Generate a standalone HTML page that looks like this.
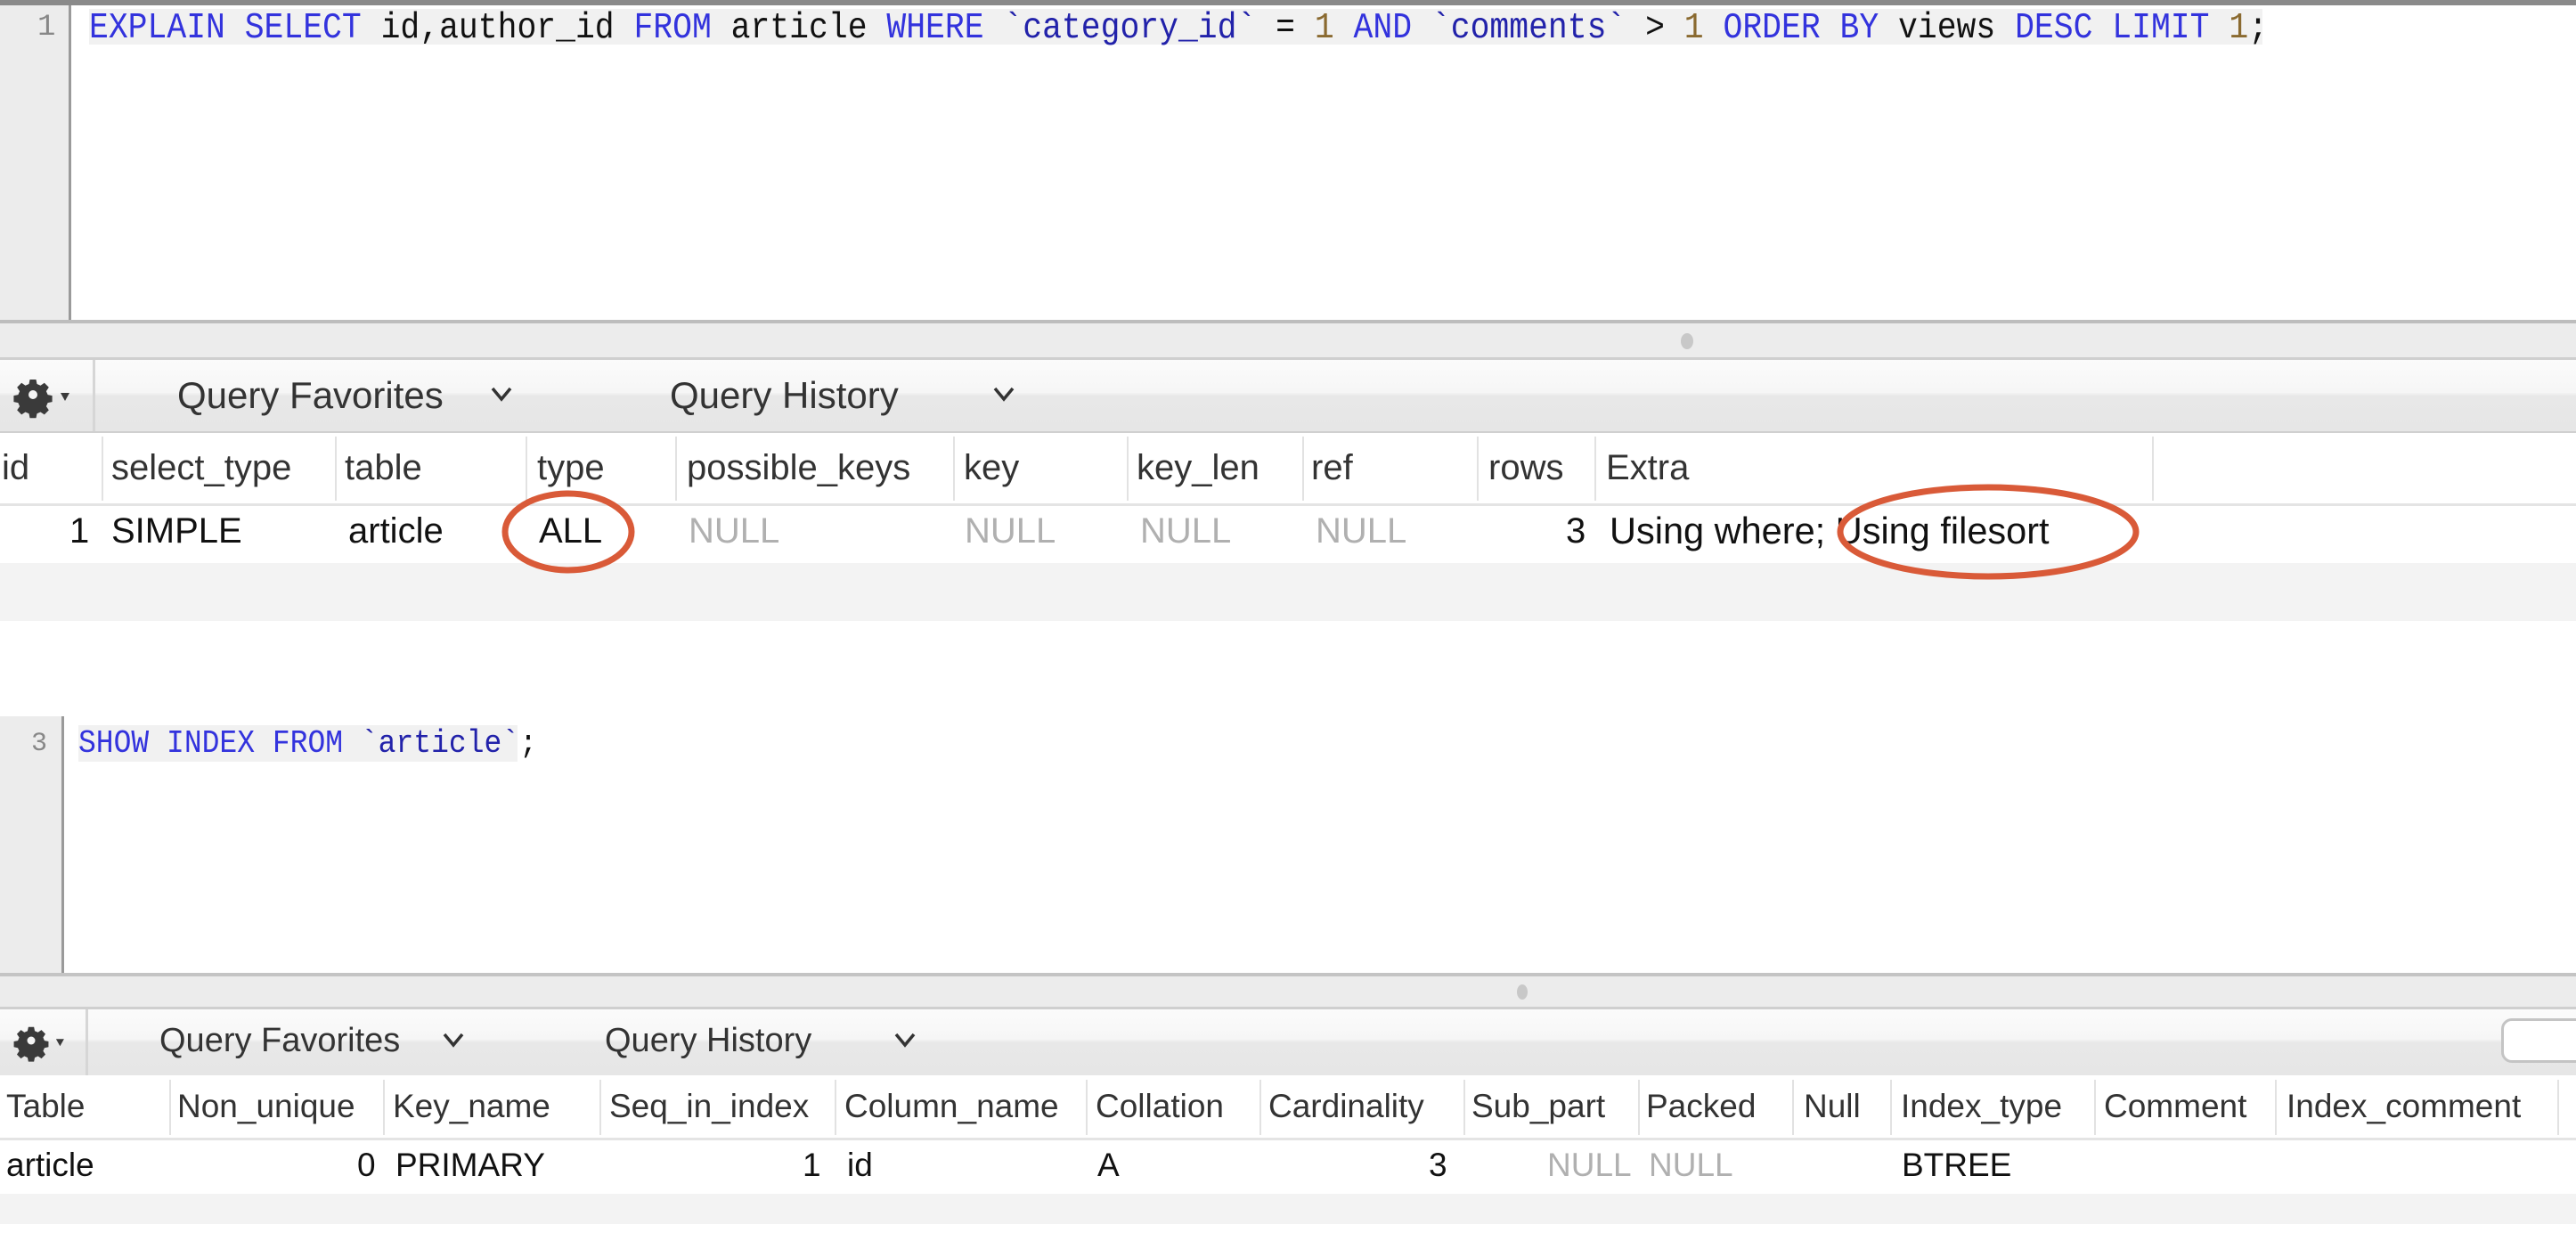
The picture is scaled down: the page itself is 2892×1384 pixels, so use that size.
<!DOCTYPE html>
<html><head><meta charset="utf-8"><style>
*{margin:0;padding:0;box-sizing:border-box}
body{width:2892px;height:1384px;background:#fff;position:relative;overflow:hidden;font-family:"Liberation Sans",sans-serif;color:#111}
.a{position:absolute;white-space:pre}
.mono{font-family:"Liberation Mono",monospace}
.kw{color:#3333dd}.bt{color:#2222aa}.num{color:#8a6a30}
.sep{position:absolute;width:2px;background:#e2e2e2}
.h{color:#333}
.null{color:#b0b0b0}
</style></head><body>
<svg width="0" height="0" style="position:absolute"><defs>
<g id="gear"><path fill="#3a3a3a" d="M-3.5,-17h7l1,5 4,1.7 4.3,-2.9 5,5 -2.9,4.3 1.7,4 5,1v7l-5,1 -1.7,4 2.9,4.3 -5,5 -4.3,-2.9 -4,1.7 -1,5h-7l-1,-5 -4,-1.7 -4.3,2.9 -5,-5 2.9,-4.3 -1.7,-4 -5,-1v-7l5,-1 1.7,-4 -2.9,-4.3 5,-5 4.3,2.9 4,-1.7z"/><circle r="5" fill="#f4f4f4"/><path d="M31,-2h10l-5,9z" fill="#3a3a3a"/></g>
<path id="chev" d="M-10,-6L0,6L10,-6" fill="none" stroke="#333" stroke-width="3.5"/>
</defs></svg>
<!-- top editor -->
<div class="a" style="left:0;top:0;width:2892px;height:6px;background:#8a8a8a"></div>
<div class="a" style="left:0;top:6px;width:78px;height:355px;background:#ececec"></div>
<div class="a" style="left:77px;top:6px;width:3px;height:355px;background:#9a9a9a"></div>
<div class="a" style="left:100px;top:10px;width:2440px;height:40px;background:#f1f1f1"></div>
<div class="a mono" style="left:42px;top:10px;font-size:34px;color:#888;line-height:42px">1</div>
<div class="a mono" style="left:100px;top:9px;font-size:36.4px;line-height:46px;transform:scaleY(1.12);transform-origin:0 50%"><span class="kw">EXPLAIN SELECT</span> id,author_id <span class="kw">FROM</span> article <span class="kw">WHERE</span> <span class="bt">`category_id`</span> = <span class="num">1</span> <span class="kw">AND</span> <span class="bt">`comments`</span> &gt; <span class="num">1</span> <span class="kw">ORDER BY</span> views <span class="kw">DESC LIMIT</span> <span class="num">1</span>;</div>
<div class="a" style="left:0;top:359px;width:2892px;height:4px;background:#bdbdbd"></div>
<div class="a" style="left:0;top:363px;width:2892px;height:40px;background:#ececec"></div>
<div class="a" style="left:1887px;top:374px;width:14px;height:18px;border-radius:50%;background:#c8c8c8"></div>
<div class="a" style="left:0;top:401px;width:2892px;height:3px;background:#cfcfcf"></div>
<!-- toolbar 1 -->
<div class="a" style="left:0;top:404px;width:2892px;height:81px;background:linear-gradient(#fbfbfb,#f6f6f6 45%,#e8e8e8 50%,#e6e6e6)"></div>
<div class="a" style="left:104px;top:404px;width:3px;height:81px;background:#d6d6d6"></div>
<svg class="a" style="left:0;top:404px" width="104" height="81"><use href="#gear" x="37" y="39"/></svg>
<div class="a h" style="left:199px;top:420px;font-size:42px;line-height:48px">Query Favorites</div>
<div class="a h" style="left:752px;top:420px;font-size:42px;line-height:48px">Query History</div>
<svg class="a" style="left:0;top:404px" width="1200" height="81"><use href="#chev" x="563" y="38"/><use href="#chev" x="1127" y="38"/></svg>
<div class="a" style="left:0;top:484px;width:2892px;height:2px;background:#d0d0d0"></div>
<!-- header 1 -->
<div class="a" style="left:0;top:486px;width:2892px;height:81px;background:#fff"></div>
<div class="a" style="left:0;top:565px;width:2892px;height:3px;background:#e4e4e4"></div>
<div class="sep" style="left:114px;top:490px;height:72px"></div>
<div class="sep" style="left:376px;top:490px;height:72px"></div>
<div class="sep" style="left:590px;top:490px;height:72px"></div>
<div class="sep" style="left:758px;top:490px;height:72px"></div>
<div class="sep" style="left:1070px;top:490px;height:72px"></div>
<div class="sep" style="left:1265px;top:490px;height:72px"></div>
<div class="sep" style="left:1462px;top:490px;height:72px"></div>
<div class="sep" style="left:1658px;top:490px;height:72px"></div>
<div class="sep" style="left:1790px;top:490px;height:72px"></div>
<div class="sep" style="left:2416px;top:490px;height:72px"></div>
<div class="a h" style="left:2px;top:502px;font-size:40px;line-height:46px">id</div>
<div class="a h" style="left:125px;top:502px;font-size:40px;line-height:46px">select_type</div>
<div class="a h" style="left:387px;top:502px;font-size:40px;line-height:46px">table</div>
<div class="a h" style="left:603px;top:502px;font-size:40px;line-height:46px">type</div>
<div class="a h" style="left:771px;top:502px;font-size:40px;line-height:46px">possible_keys</div>
<div class="a h" style="left:1082px;top:502px;font-size:40px;line-height:46px">key</div>
<div class="a h" style="left:1276px;top:502px;font-size:40px;line-height:46px">key_len</div>
<div class="a h" style="left:1472px;top:502px;font-size:40px;line-height:46px">ref</div>
<div class="a h" style="left:1671px;top:502px;font-size:40px;line-height:46px">rows</div>
<div class="a h" style="left:1803px;top:502px;font-size:40px;line-height:46px">Extra</div>
<!-- row 1 -->
<div class="a" style="left:0;top:632px;width:2892px;height:65px;background:#f3f3f3"></div>
<div class="a" style="left:78px;top:573px;font-size:40px;line-height:46px">1</div>
<div class="a" style="left:125px;top:573px;font-size:40px;line-height:46px">SIMPLE</div>
<div class="a" style="left:391px;top:573px;font-size:40px;line-height:46px">article</div>
<div class="a" style="left:605px;top:573px;font-size:40px;line-height:46px">ALL</div>
<div class="a null" style="left:773px;top:573px;font-size:40px;line-height:46px">NULL</div>
<div class="a null" style="left:1083px;top:573px;font-size:40px;line-height:46px">NULL</div>
<div class="a null" style="left:1280px;top:573px;font-size:40px;line-height:46px">NULL</div>
<div class="a null" style="left:1477px;top:573px;font-size:40px;line-height:46px">NULL</div>
<div class="a" style="left:1758px;top:573px;font-size:40px;line-height:46px">3</div>
<div class="a" style="left:1807px;top:573px;font-size:41.5px;line-height:46px">Using where; Using filesort</div>
<svg class="a" style="left:0;top:0" width="2892" height="700"><ellipse cx="638" cy="597" rx="71" ry="43" fill="none" stroke="#d95a38" stroke-width="7"/><ellipse cx="2232" cy="597" rx="166" ry="50" fill="none" stroke="#d95a38" stroke-width="7"/></svg>
<!-- editor 2 -->
<div class="a" style="left:0;top:804px;width:70px;height:290px;background:#ececec"></div>
<div class="a" style="left:69px;top:804px;width:3px;height:290px;background:#9a9a9a"></div>
<div class="a" style="left:88px;top:814px;width:493px;height:41px;background:#f1f1f1"></div>
<div class="a mono" style="left:35px;top:814px;font-size:30px;color:#888;line-height:42px">3</div>
<div class="a mono" style="left:88px;top:814px;font-size:33px;line-height:42px;transform:scaleY(1.1);transform-origin:0 50%"><span class="kw">SHOW INDEX FROM</span> <span class="bt">`article`</span>;</div>
<div class="a" style="left:0;top:1092px;width:2892px;height:4px;background:#c4c4c4"></div>
<div class="a" style="left:0;top:1096px;width:2892px;height:36px;background:#ececec"></div>
<div class="a" style="left:1703px;top:1105px;width:12px;height:17px;border-radius:50%;background:#c8c8c8"></div>
<div class="a" style="left:0;top:1130px;width:2892px;height:3px;background:#cfcfcf"></div>
<!-- toolbar 2 -->
<div class="a" style="left:0;top:1133px;width:2892px;height:74px;background:linear-gradient(#fbfbfb,#f6f6f6 45%,#e8e8e8 50%,#e6e6e6)"></div>
<div class="a" style="left:96px;top:1133px;width:3px;height:74px;background:#d6d6d6"></div>
<svg class="a" style="left:0;top:1133px" width="96" height="74"><g transform="translate(35,35) scale(0.9)"><use href="#gear"/></g></svg>
<div class="a h" style="left:179px;top:1146px;font-size:38px;line-height:44px">Query Favorites</div>
<div class="a h" style="left:679px;top:1146px;font-size:38px;line-height:44px">Query History</div>
<svg class="a" style="left:0;top:1133px" width="1100" height="74"><use href="#chev" x="509" y="34"/><use href="#chev" x="1016" y="34"/></svg>
<div class="a" style="left:2808px;top:1143px;width:100px;height:50px;border:3px solid #c4c4c4;border-radius:12px;background:#fff"></div>
<!-- header 2 -->
<div class="a" style="left:0;top:1207px;width:2892px;height:72px;background:#fff"></div>
<div class="a" style="left:0;top:1277px;width:2892px;height:3px;background:#e4e4e4"></div>
<div class="sep" style="left:190px;top:1212px;height:62px"></div>
<div class="sep" style="left:430px;top:1212px;height:62px"></div>
<div class="sep" style="left:673px;top:1212px;height:62px"></div>
<div class="sep" style="left:937px;top:1212px;height:62px"></div>
<div class="sep" style="left:1219px;top:1212px;height:62px"></div>
<div class="sep" style="left:1414px;top:1212px;height:62px"></div>
<div class="sep" style="left:1643px;top:1212px;height:62px"></div>
<div class="sep" style="left:1839px;top:1212px;height:62px"></div>
<div class="sep" style="left:2012px;top:1212px;height:62px"></div>
<div class="sep" style="left:2122px;top:1212px;height:62px"></div>
<div class="sep" style="left:2351px;top:1212px;height:62px"></div>
<div class="sep" style="left:2554px;top:1212px;height:62px"></div>
<div class="sep" style="left:2871px;top:1212px;height:62px"></div>
<div class="a h" style="left:7px;top:1220px;font-size:37px;line-height:44px">Table</div>
<div class="a h" style="left:199px;top:1220px;font-size:37px;line-height:44px">Non_unique</div>
<div class="a h" style="left:441px;top:1220px;font-size:37px;line-height:44px">Key_name</div>
<div class="a h" style="left:684px;top:1220px;font-size:37px;line-height:44px">Seq_in_index</div>
<div class="a h" style="left:948px;top:1220px;font-size:37px;line-height:44px">Column_name</div>
<div class="a h" style="left:1230px;top:1220px;font-size:37px;line-height:44px">Collation</div>
<div class="a h" style="left:1424px;top:1220px;font-size:37px;line-height:44px">Cardinality</div>
<div class="a h" style="left:1652px;top:1220px;font-size:37px;line-height:44px">Sub_part</div>
<div class="a h" style="left:1848px;top:1220px;font-size:37px;line-height:44px">Packed</div>
<div class="a h" style="left:2025px;top:1220px;font-size:37px;line-height:44px">Null</div>
<div class="a h" style="left:2134px;top:1220px;font-size:37px;line-height:44px">Index_type</div>
<div class="a h" style="left:2362px;top:1220px;font-size:37px;line-height:44px">Comment</div>
<div class="a h" style="left:2567px;top:1220px;font-size:37px;line-height:44px">Index_comment</div>
<!-- row 2 -->
<div class="a" style="left:0;top:1340px;width:2892px;height:34px;background:#f3f3f3"></div>
<div class="a" style="left:7px;top:1286px;font-size:37px;line-height:44px">article</div>
<div class="a" style="left:401px;top:1286px;font-size:37px;line-height:44px">0</div>
<div class="a" style="left:444px;top:1286px;font-size:37px;line-height:44px">PRIMARY</div>
<div class="a" style="left:901px;top:1286px;font-size:37px;line-height:44px">1</div>
<div class="a" style="left:951px;top:1286px;font-size:37px;line-height:44px">id</div>
<div class="a" style="left:1232px;top:1286px;font-size:37px;line-height:44px">A</div>
<div class="a" style="left:1604px;top:1286px;font-size:37px;line-height:44px">3</div>
<div class="a null" style="left:1737px;top:1286px;font-size:37px;line-height:44px">NULL</div>
<div class="a null" style="left:1851px;top:1286px;font-size:37px;line-height:44px">NULL</div>
<div class="a" style="left:2135px;top:1286px;font-size:37px;line-height:44px">BTREE</div>
</body></html>
